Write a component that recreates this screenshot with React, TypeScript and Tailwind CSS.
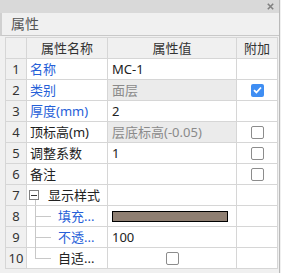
import React from "react";

type Row = {
  no: number;
  name: string;
  blue?: boolean;
  value?: string;
  readonly?: boolean;
  extra?: "none" | "checked" | "empty";
  kind?: "group" | "child";
  last?: boolean;
  swatch?: boolean;
  valueCheck?: boolean;
};

const rows: Row[] = [
  { no: 1, name: "名称", blue: true, value: "MC-1", extra: "none" },
  { no: 2, name: "类别", blue: true, value: "面层", readonly: true, extra: "checked" },
  { no: 3, name: "厚度(mm)", blue: true, value: "2", extra: "none" },
  { no: 4, name: "顶标高(m)", value: "层底标高(-0.05)", readonly: true, extra: "empty" },
  { no: 5, name: "调整系数", value: "1", extra: "empty" },
  { no: 6, name: "备注", value: "", extra: "empty" },
  { no: 7, name: "显示样式", kind: "group", extra: "none" },
  { no: 8, name: "填充...", blue: true, kind: "child", swatch: true, extra: "none" },
  { no: 9, name: "不透...", blue: true, kind: "child", value: "100", extra: "none" },
  { no: 10, name: "自适...", kind: "child", last: true, valueCheck: true, extra: "none" },
];

function Check({ checked }: { checked?: boolean }) {
  if (checked) {
    return (
      <div className="w-[13px] h-[13px] rounded-[2px] bg-[#3f8ef3] flex items-center justify-center">
        <svg width="9" height="8" viewBox="0 0 9 8">
          <path d="M1 4.2 L3.4 6.5 L8 1.5" stroke="#fff" strokeWidth="1.8" fill="none" />
        </svg>
      </div>
    );
  }
  return <div className="w-[13px] h-[13px] rounded-[2px] border border-[#8c8c8c] bg-white" />;
}

function NameCell({ row }: { row: Row }) {
  const color = row.blue ? "text-[#2660d8]" : "text-[#222]";
  if (row.kind === "group") {
    return (
      <div className="relative h-full flex items-center pl-[2px]">
        <div className="w-[10px] h-[10px] border border-[#808080] bg-white flex items-center justify-center">
          <div className="w-[6px] h-px bg-[#333]" />
        </div>
        <div className="absolute left-[8px] top-[15px] bottom-0 w-px bg-[#c8c8c8]" />
        <span className="ml-[9px] text-[#222]">{row.name}</span>
      </div>
    );
  }
  if (row.kind === "child") {
    return (
      <div className="relative h-full flex items-center">
        <div className={"absolute left-[8px] top-0 w-px bg-[#c8c8c8] " + (row.last ? "h-[10px]" : "h-[21px]")} />
        <div className="absolute left-[8px] top-[10px] w-[16px] h-px bg-[#c8c8c8]" />
        <span className={"ml-[31px] " + color}>{row.name}</span>
      </div>
    );
  }
  return <div className={"h-full flex items-center pl-[3px] " + color}>{row.name}</div>;
}

export default function App() {
  return (
    <div
      className="w-[281px] h-[273px] bg-[#f0f0f0] overflow-hidden text-[13px] leading-none"
      style={{ fontFamily: '"Noto Sans", "Noto Sans CJK SC", sans-serif' }}
    >
      <div className="w-[280px] h-full border-r border-[#b9b9b9] flex flex-col">
        <div className="h-[13px] bg-[#d9d9d9] flex justify-end items-center pr-[5px]">
          <svg width="7" height="7" viewBox="0 0 7 7">
            <path d="M0.8 0.8 L6.2 6.2 M6.2 0.8 L0.8 6.2" stroke="#808080" strokeWidth="1.6" />
          </svg>
        </div>
        <div className="h-[23px] border-l-2 border-[#d0d0d0] border-b border-b-[#c8c8c8] flex items-center pl-[9px] text-[14px] text-[#555]">
          属性
        </div>
        <div className="pl-[5px] pt-px">
          <div className="grid grid-cols-[20px_80px_128px_40px] auto-rows-[20px] gap-px bg-[#d6d6d6] p-px w-[273px]">
            <div className="bg-[#f0f0f0]" />
            <div className="bg-[#f0f0f0] flex items-center justify-center text-[#333]">属性名称</div>
            <div className="bg-[#f0f0f0] flex items-center justify-center text-[#333]">属性值</div>
            <div className="bg-[#f0f0f0] flex items-center justify-center text-[#333]">附加</div>
            {rows.map((row) => (
              <React.Fragment key={row.no}>
                <div className="bg-[#f0f0f0] flex items-center justify-center text-[#333]">{row.no}</div>
                <div className="bg-white">
                  <NameCell row={row} />
                </div>
                <div
                  className={
                    "flex items-center pl-[4px] " +
                    (row.readonly ? "bg-[#ebebeb] text-[#8a8a8a]" : "bg-white text-[#222]")
                  }
                >
                  {row.swatch && (
                    <div className="w-[116px] h-[11px] bg-[#8f7f72] border border-black" />
                  )}
                  {row.valueCheck && (
                    <div className="w-full flex justify-center pr-[4px]">
                      <Check />
                    </div>
                  )}
                  {row.value}
                </div>
                <div className="bg-white flex items-center justify-center">
                  {row.extra === "checked" && <Check checked />}
                  {row.extra === "empty" && <Check />}
                </div>
              </React.Fragment>
            ))}
          </div>
        </div>
      </div>
    </div>
  );
}
